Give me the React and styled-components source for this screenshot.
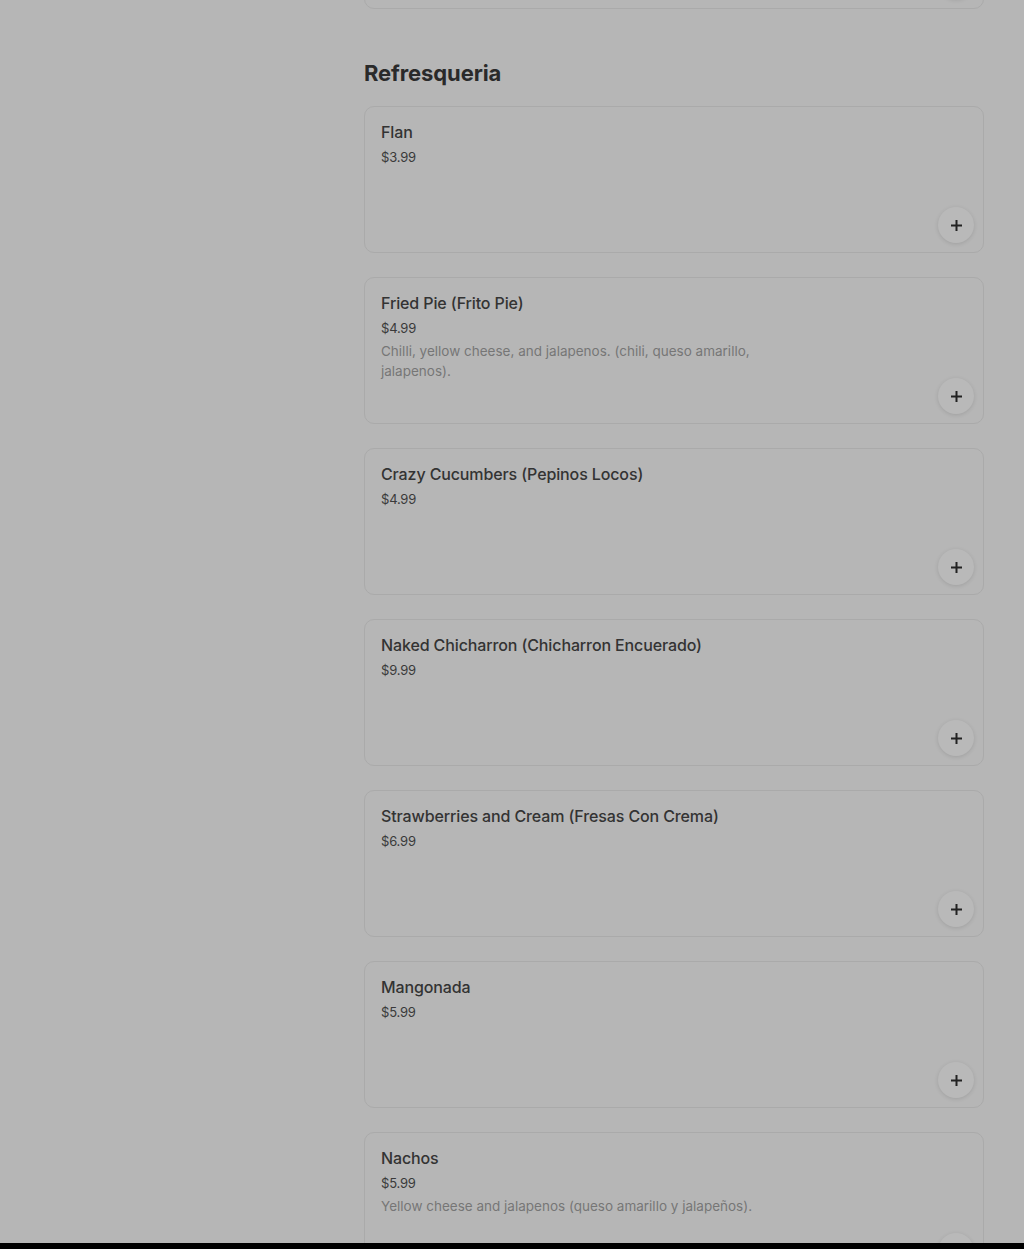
import React from 'react';
import styled, { createGlobalStyle } from 'styled-components';

const GlobalStyle = createGlobalStyle`
  html, body {
    margin: 0;
    padding: 0;
    background: #b6b6b6;
    font-family: Inter, "Liberation Sans", sans-serif;
  }
`;

const Screen = styled.div`
  height: 1249px;
  display: flex;
  flex-direction: column;
  background: #b6b6b6;
`;

const Viewport = styled.div`
  flex: 1;
  overflow: hidden;
  padding-left: 364px;
`;

// scrolled list: the previous card is mostly above the fold
const Scroller = styled.div`
  width: 620px;
  margin-top: -138px;
  display: flex;
  flex-direction: column;
`;

const BottomBar = styled.div`
  height: 6px;
  background: #000;
`;

const Section = styled.section`
  display: flex;
  flex-direction: column;
  gap: 24px;
`;

const Heading = styled.h2`
  margin: 50px 0 -5px;
  font-size: 22px;
  line-height: 28px;
  font-weight: 700;
  letter-spacing: -0.1px;
  color: #2a2a2a;
`;

const Card = styled.div`
  position: relative;
  box-sizing: border-box;
  height: 147px;
  border: 1px solid #aaaaaa;
  border-radius: 10px;
  padding: 13px 16px 0;
  display: flex;
  flex-direction: column;
`;

const Title = styled.div`
  font-size: 16px;
  line-height: 24px;
  font-weight: 500;
  letter-spacing: -0.12px;
  color: #333;
`;

const Price = styled.div`
  margin-top: 3px;
  font-size: 13px;
  line-height: 20px;
  letter-spacing: -0.2px;
  color: #3a3a3a;
`;

const Desc = styled.div`
  margin-top: 4px;
  max-width: 390px;
  font-size: 13.5px;
  line-height: 19.5px;
  color: #767676;
`;

const AddButton = styled.button`
  position: absolute;
  right: 9px;
  bottom: 9px;
  width: 36px;
  height: 36px;
  border-radius: 50%;
  border: none;
  padding: 0;
  background: #b9b9b9;
  box-shadow: 0 1px 4px rgba(0, 0, 0, 0.12);
  display: flex;
  align-items: center;
  justify-content: center;
  cursor: pointer;
`;

const items = [
  { name: 'Flan', price: '$3.99' },
  {
    name: 'Fried Pie (Frito Pie)',
    price: '$4.99',
    desc: 'Chilli, yellow cheese, and jalapenos. (chili, queso amarillo, jalapenos).',
  },
  { name: 'Crazy Cucumbers (Pepinos Locos)', price: '$4.99' },
  { name: 'Naked Chicharron (Chicharron Encuerado)', price: '$9.99' },
  { name: 'Strawberries and Cream (Fresas Con Crema)', price: '$6.99' },
  { name: 'Mangonada', price: '$5.99' },
  {
    name: 'Nachos',
    price: '$5.99',
    desc: 'Yellow cheese and jalapenos (queso amarillo y jalapeños).',
  },
];

const Plus = () => (
  <svg width="13" height="13" viewBox="0 0 13 13">
    <path d="M6.5 1v11M1 6.5h11" stroke="#222" strokeWidth="2" />
  </svg>
);

const MenuItem = ({ item }) => (
  <Card>
    {item.name && <Title>{item.name}</Title>}
    {item.price && <Price>{item.price}</Price>}
    {item.desc && <Desc>{item.desc}</Desc>}
    <AddButton aria-label="Add">
      <Plus />
    </AddButton>
  </Card>
);

export default function App() {
  return (
    <Screen>
      <GlobalStyle />
      <Viewport>
        <Scroller>
          <Section>
            <MenuItem item={{}} />
          </Section>
          <Section>
            <Heading>Refresqueria</Heading>
            {items.map((it) => (
              <MenuItem key={it.name} item={it} />
            ))}
          </Section>
        </Scroller>
      </Viewport>
      <BottomBar />
    </Screen>
  );
}
